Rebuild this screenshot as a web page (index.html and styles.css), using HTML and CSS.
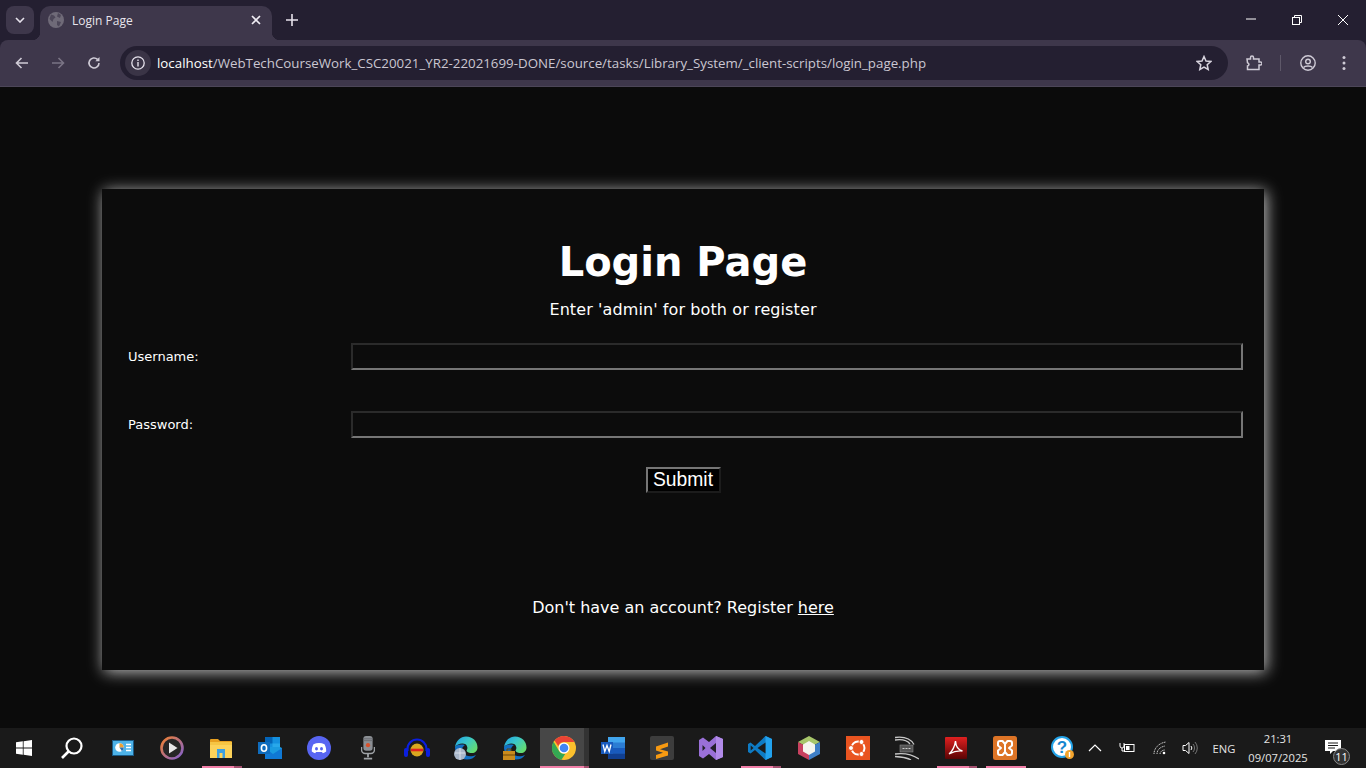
FILE: index.html
```html
<!DOCTYPE html>
<html lang="en">
<head>
<meta charset="utf-8">
<title>Login Page</title>
<link rel="stylesheet" href="styles.css">
</head>
<body>
<div class="screen">
  <header class="browser">
    <div class="tabstrip">
      <button class="tabsearch"><svg width="10" height="6" viewBox="0 0 10 6"><path d="M1 1l4 4 4-4" fill="none" stroke="#e6e2ec" stroke-width="1.6"/></svg></button>
      <div class="tab">
        <svg class="favicon" width="16" height="16" viewBox="0 0 16 16"><circle cx="8" cy="8" r="8" fill="#6f6a78"/><path d="M3 2.500l3 1 1.500 2-2 1.500-1 3-3-3zM10 1l3 2-1 3-3-1.500zM9 9l4 1-2 4.500-2-1.500z" fill="#4d4759"/></svg>
        <span class="tabtitle">Login Page</span>
        <svg class="tabclose" width="10" height="10" viewBox="0 0 10 10"><path d="M1 1l8 8M9 1l-8 8" stroke="#f0edf4" stroke-width="1.700"/></svg>
      </div>
      <svg class="newtab" width="12" height="12" viewBox="0 0 12 12"><path d="M6 0v12M0 6h12" stroke="#e6e2ec" stroke-width="1.600"/></svg>
      <div class="winctl">
        <svg class="winmin" width="10" height="10" viewBox="0 0 10 10"><path d="M0 5h10" stroke="#fff"/></svg>
        <svg width="10" height="10" viewBox="0 0 10 10"><path d="M2.500 2V.5h7v7H8" fill="none" stroke="#fff"/><rect x=".5" y="2.500" width="7" height="7" fill="none" stroke="#fff"/></svg>
        <svg width="10" height="10" viewBox="0 0 10 10"><path d="M0 0l10 10M10 0L0 10" stroke="#fff"/></svg>
      </div>
    </div>
    <div class="toolbar">
      <svg class="navicon" width="14" height="12" viewBox="0 0 14 12"><path d="M13 6H2M6.500 1L1.500 6l5 5" fill="none" stroke="#cfcbd6" stroke-width="1.600"/></svg>
      <svg class="navicon" width="14" height="12" viewBox="0 0 14 12"><path d="M1 6h11M7.500 1l5 5-5 5" fill="none" stroke="#7a7485" stroke-width="1.600"/></svg>
      <svg class="navicon" width="14" height="14" viewBox="0 0 14 14"><path d="M12 7a5 5 0 1 1-1.500-3.600" fill="none" stroke="#cfcbd6" stroke-width="1.600"/><path d="M12.500 1v4.200H8.300z" fill="#cfcbd6"/></svg>
      <div class="omnibox">
        <span class="siteinfo"><svg width="14" height="14" viewBox="0 0 14 14"><circle cx="7" cy="7" r="6.200" fill="none" stroke="#e6e2ec" stroke-width="1.300"/><path d="M7 6v4.500M7 3.500v1.500" stroke="#e6e2ec" stroke-width="1.400"/></svg></span>
        <span class="url"><b>localhost</b>/WebTechCourseWork_CSC20021_YR2-22021699-DONE/source/tasks/Library_System/_client-scripts/login_page.php</span>
        <svg class="star" width="16" height="16" viewBox="0 0 16 16"><path d="M8 1.500l2 4.500 4.800.5-3.600 3.200 1 4.800L8 12.100l-4.200 2.400 1-4.800L1.200 6.500 6 6z" fill="none" stroke="#d8d4de" stroke-width="1.500"/></svg>
      </div>
      <svg class="puzzle" width="16" height="16" viewBox="0 0 16 16"><path d="M1 4h3.500V2.500a1.500 1.500 0 0 1 3 0V4H13v3h1.500a1 1 0 0 1 0 3H13v4.500H1.500V11a1.500 1.500 0 0 0 1-2.500 1.500 1.500 0 0 0-1-.8z" fill="none" stroke="#cfcbd6" stroke-width="1.500"/></svg>
      <span class="tooldiv"></span>
      <svg class="avatar" width="16" height="16" viewBox="0 0 16 16"><circle cx="8" cy="8" r="7.200" fill="none" stroke="#cfcbd6" stroke-width="1.400"/><circle cx="8" cy="6.500" r="2.300" fill="none" stroke="#cfcbd6" stroke-width="1.400"/><path d="M3.500 12.500c1.500-2 7.500-2 9 0" fill="none" stroke="#cfcbd6" stroke-width="1.400"/></svg>
      <svg class="kebab" width="4" height="16" viewBox="0 0 4 16"><circle cx="2" cy="2.500" r="1.500" fill="#cfcbd6"/><circle cx="2" cy="8" r="1.500" fill="#cfcbd6"/><circle cx="2" cy="13.500" r="1.500" fill="#cfcbd6"/></svg>
    </div>
  </header>

  <main class="page">
    <section class="card">
      <h1>Login Page</h1>
      <p class="hint">Enter 'admin' for both or register</p>
      <form class="loginform">
        <div class="fields">
          <label class="fieldlabel" for="u">Username:</label>
          <input class="field" id="u" type="text">
          <label class="fieldlabel" for="p">Password:</label>
          <input class="field" id="p" type="password">
        </div>
        <div class="actions"><button class="submit" type="button">Submit</button></div>
      </form>
      <p class="register">Don't have an account? Register <a href="#">here</a></p>
    </section>
  </main>

  <footer class="taskbar">
    <div class="apps">
      <span class="app narrow"><svg width="16" height="16" viewBox="0 0 16 16"><path d="M0 2.300l6.800-1v6.300H0zM7.600 1.200L16 0v7.600H7.600zM0 8.400h6.800v6.300l-6.800-1zM7.600 8.400H16V16l-8.400-1.200z" fill="#fff"/></svg></span>
      <span class="app narrow"><svg width="24" height="24" viewBox="0 0 24 24"><circle cx="14" cy="10" r="7.500" fill="none" stroke="#fff" stroke-width="2.200"/><path d="M8.500 15.500L2 22" stroke="#fff" stroke-width="2.600"/></svg></span>
      <span class="gap2"></span>
      <span class="app"><svg width="22" height="16" viewBox="0 0 22 16"><rect x=".5" y=".5" width="21" height="15" fill="#4db2e8" stroke="#1a5a86"/><circle cx="7.500" cy="7.500" r="4.300" fill="#fff"/><path d="M7.500 7.500V3.200a4.300 4.300 0 0 1 4.300 4.300z" fill="#f0a030"/><path d="M7.500 7.500h4.300a4.300 4.300 0 0 1-2 3.600z" fill="#2a6fb0"/><path d="M14 4.500h5M14 7.500h5M14 10.500h5" stroke="#fff" stroke-width="1.400"/></svg></span>
      <span class="app"><svg width="24" height="24" viewBox="0 0 24 24"><defs><linearGradient id="pl" x1="0" y1="0" x2="1" y2="1"><stop offset="0" stop-color="#f08030"/><stop offset="1" stop-color="#8060d0"/></linearGradient></defs><circle cx="12" cy="12" r="10.500" fill="#262626" stroke="url(#pl)" stroke-width="2.600"/><path d="M9 6.500l8.500 5.500L9 17.500z" fill="#e8e8e8"/></svg></span>
      <span class="app running stack"><svg width="22" height="20" viewBox="0 0 22 20"><path d="M0 2a1 1 0 0 1 1-1h7l2 2h11a1 1 0 0 1 1 1v2H0z" fill="#e8a020"/><rect y="4" width="22" height="16" fill="#fcd25a"/><path d="M0 4h22v3H0z" fill="#f6c544"/><path d="M7 11h8v9H7z" fill="#3c9fe0"/><path d="M9.500 15h3v5h-3z" fill="#fcd25a"/></svg></span>
      <span class="app"><svg width="24" height="24" viewBox="0 0 24 24"><rect x="7" y="1" width="15" height="13" fill="#1490df"/><rect x="7" y="1" width="7.500" height="6.500" fill="#0364b8"/><rect x="14.500" y="7.500" width="7.500" height="6.500" fill="#28a8ea"/><path d="M7 11l15 0 2 1v10l-17 0z" fill="#1a9be0"/><path d="M7 12l8 6 9-6v11H7z" fill="#0f78d4"/><rect x="0" y="6" width="12" height="12" fill="#0f6cbd"/><ellipse cx="6" cy="12" rx="2.600" ry="3.300" fill="none" stroke="#fff" stroke-width="1.600"/></svg></span>
      <span class="app"><svg width="24" height="24" viewBox="0 0 24 24"><circle cx="12" cy="12" r="12" fill="#5865f2"/><path d="M6.500 8.200c3.300-1.700 7.700-1.700 11 0 1.300 2.200 1.800 4.700 1.700 7.300-1 .8-2.200 1.400-3.400 1.700l-.8-1.300H9l-.8 1.300c-1.200-.3-2.400-.9-3.400-1.700-.1-2.600.4-5.100 1.700-7.300z" fill="#fff"/><ellipse cx="9.500" cy="12.700" rx="1.500" ry="1.700" fill="#5865f2"/><ellipse cx="14.500" cy="12.700" rx="1.500" ry="1.700" fill="#5865f2"/></svg></span>
      <span class="app"><svg width="14" height="24" viewBox="0 0 14 26"><rect x="2" y="0" width="10" height="16" rx="3" fill="#8b8f94"/><path d="M2 5h10M2 3h10" stroke="#6a6d72"/><circle cx="7" cy="10" r="2.300" fill="#d8502a"/><path d="M0 12v3a4 4 0 0 0 4 4h6a4 4 0 0 0 4-4v-3" fill="none" stroke="#9ea2a6" stroke-width="1.500"/><path d="M7 19v4M2.500 24.500h9" stroke="#9ea2a6" stroke-width="2"/></svg></span>
      <span class="app"><svg width="26" height="22" viewBox="0 0 26 22"><path d="M3.500 14V12a9.500 9.500 0 0 1 19 0v2" fill="none" stroke="#0b1fe0" stroke-width="2.200"/><rect x="0" y="11" width="4" height="9" rx="2" fill="#0b1fe0"/><rect x="22" y="11" width="4" height="9" rx="2" fill="#0b1fe0"/><ellipse cx="13" cy="13" rx="6.500" ry="6.500" fill="#d9a820"/><path d="M7 13h12" stroke="#e02020" stroke-width="2.600"/></svg></span>
      <span class="app"><svg width="24" height="24" viewBox="0 0 24 24"><defs><linearGradient id="ed" x1="0" y1="0" x2="1" y2=".7"><stop offset="0" stop-color="#1f9ee6"/><stop offset=".5" stop-color="#3bc8c8"/><stop offset="1" stop-color="#66dc6e"/></linearGradient></defs><path d="M1 11c0 7 5 12.500 12 12.500 4 0 7-1.500 9-4.500-4 2-10 2-13-2-2-3-1-6 2-8-5-1-9 0-10 2z" fill="#1270c4"/><path d="M1 11C2 5 6.500 .5 12 .5c7 0 11.500 5 11.500 11 0 3.500-2.500 5.500-5.500 5.500-2.500 0-5-.5-5.500-2.500 1-1.500 1.500-3-.5-6-3.500-2-9-.5-11 2.500z" fill="url(#ed)"/><circle cx="6" cy="18" r="6" fill="#a9b7ca"/><path d="M1 17h10M6 12v12" stroke="#e4e9f0" stroke-width=".8"/></svg></span>
      <span class="app"><svg width="24" height="24" viewBox="0 0 24 24"><path d="M1 11c0 7 5 12.500 12 12.500 4 0 7-1.500 9-4.500-4 2-10 2-13-2-2-3-1-6 2-8-5-1-9 0-10 2z" fill="#1270c4"/><path d="M1 11C2 5 6.500 .5 12 .5c7 0 11.500 5 11.500 11 0 3.500-2.500 5.500-5.500 5.500-2.500 0-5-.5-5.500-2.500 1-1.500 1.500-3-.5-6-3.500-2-9-.5-11 2.500z" fill="url(#ed)"/><rect x="0" y="15" width="12" height="9" fill="#c98a1c"/><path d="M4 15v-2h4v2M0 19h12" fill="none" stroke="#6b4708"/></svg></span>
      <span class="app active running"><svg width="24" height="24" viewBox="0 0 24 24"><circle cx="12" cy="12" r="12" fill="#fbc02d"/><path d="M12 0a12 12 0 0 1 10.400 6H12a6 6 0 0 0-5.700 4.200L2.600 4.400A12 12 0 0 1 12 0z" fill="#ea4335"/><path d="M1.600 5.800L7 15a6 6 0 0 0 6.200 2.900l-3.700 5.900A12 12 0 0 1 1.600 5.800z" fill="#34a853"/><circle cx="12" cy="12" r="5.500" fill="#fff"/><circle cx="12" cy="12" r="4.300" fill="#4285f4"/></svg></span>
      <span class="app"><svg width="24" height="22" viewBox="0 0 24 22"><rect x="7" y="0" width="17" height="22" rx="1" fill="#2b7cd3"/><rect x="7" y="0" width="17" height="5.500" fill="#41a5ee"/><rect x="7" y="11" width="17" height="5.500" fill="#185abd"/><rect x="7" y="16.500" width="17" height="5.500" fill="#103f91"/><rect x="0" y="5" width="12" height="12" fill="#185abd"/><path d="M2 7.500l1.800 7 2.200-6 2.200 6 1.800-7" fill="none" stroke="#fff" stroke-width="1.300"/></svg></span>
      <span class="app"><svg width="24" height="24" viewBox="0 0 24 24"><rect width="24" height="24" rx="2" fill="#3d3d3d"/><path d="M6 10.500l12-4v4l-8 2.700 8 2.300v4l-12 3.500v-4l7-2.200-7-2.300z" fill="#f79a12"/></svg></span>
      <span class="app"><svg width="24" height="24" viewBox="0 0 24 24"><path d="M17 0l7 3v18l-7 3-7-6-6 4.500L0 20V4l4-2.500L10 6z" fill="#9a70d8"/><path d="M17 7v10l-6-5z" fill="#23202a"/><path d="M3.500 9v6l3-3z" fill="#23202a"/><path d="M17 0l7 3v18l-7 3z" fill="#b18ae8"/></svg></span>
      <span class="app running stack"><svg width="24" height="24" viewBox="0 0 24 24"><path d="M17.500 0L24 3v18l-6.500 3L7 14l-4.500 3.500L0 16V8l2.500-1.500L7 10z" fill="#0e7bc4"/><path d="M17.500 0L24 3v18l-6.500 3z" fill="#22a2ee"/><path d="M17.500 6.500v11L9.500 12z" fill="#1a1a1a"/><path d="M2.700 9.500v5L5.500 12z" fill="#1a1a1a"/></svg></span>
      <span class="app"><svg width="22" height="24" viewBox="0 0 22 24"><path d="M11 0l11 6-11 6L0 6z" fill="#a7c66a"/><path d="M0 6l11 6v12L0 18z" fill="#c8415f"/><path d="M22 6L11 12v12l11-6z" fill="#3f7fc6"/><path d="M11 5l6 3.500v7L11 19l-6-3.500v-7z" fill="#f5f5ee"/></svg></span>
      <span class="app"><svg width="24" height="24" viewBox="0 0 24 24"><rect width="24" height="24" fill="#e95420"/><circle cx="12" cy="12" r="6.500" fill="none" stroke="#fff" stroke-width="2"/><circle cx="5" cy="12" r="2.500" fill="#fff" stroke="#e95420"/><circle cx="15.500" cy="6" r="2.500" fill="#fff" stroke="#e95420"/><circle cx="15.500" cy="18" r="2.500" fill="#fff" stroke="#e95420"/></svg></span>
      <span class="app"><svg width="24" height="24" viewBox="0 0 24 24"><path d="M0 1.500c8-1 15 0 19 7M0 4c7-1 12 0 15 4M0 18c7-1 15-1 24 5M0 20.500c7 .5 12 1 16 3.500" fill="none" stroke="#c8c8c8" stroke-width="1.300"/><rect x="5" y="9" width="13" height="7" fill="#555" stroke="#888" stroke-width=".6"/><path d="M7.500 12.500h8" stroke="#ccc" stroke-dasharray="2 1"/></svg></span>
      <span class="app running stack"><svg width="22" height="22" viewBox="0 0 22 22"><defs><linearGradient id="ac" x1="0" y1="0" x2="0" y2="1"><stop offset="0" stop-color="#e02020"/><stop offset="1" stop-color="#5a0404"/></linearGradient></defs><rect width="22" height="22" rx="1" fill="url(#ac)"/><path d="M4 17c3-2 6-8 6.500-13 .3 5 3 9 7 10-4-.5-8 0-13.500 3z" fill="none" stroke="#fff" stroke-width="1.400"/></svg></span>
      <span class="app running"><svg width="24" height="24" viewBox="0 0 24 24"><rect width="24" height="24" rx="2.500" fill="#dd7426"/><path d="M7 5h2.500L12 8l2.500-3H17a2 2 0 0 1 2 2v2.500L16 12l3 2.500V17a2 2 0 0 1-2 2h-2.500L12 16l-2.500 3H7a2 2 0 0 1-2-2v-2.500L8 12 5 9.500V7a2 2 0 0 1 2-2z" fill="none" stroke="#fff" stroke-width="2" stroke-linejoin="round"/><path d="M12 8v8" stroke="#fff" stroke-width="2"/></svg></span>
    </div>
    <div class="tray">
      <span class="trayitem help"><svg width="24" height="24" viewBox="0 0 24 24"><circle cx="11" cy="11" r="10" fill="#fff" stroke="#23a3e8" stroke-width="2"/><text class="helpq" x="11" y="16.500" text-anchor="middle">?</text><circle cx="18.500" cy="18.500" r="4.500" fill="#f2a32c"/><path d="M18.500 16v5" stroke="#fff" stroke-width="1.400"/></svg></span>
      <span class="trayitem chev"><svg width="14" height="8" viewBox="0 0 14 8"><path d="M1 7l6-6 6 6" fill="none" stroke="#fff" stroke-width="1.200"/></svg></span>
      <span class="trayitem batt"><svg width="16" height="12" viewBox="0 0 16 12"><path d="M1 1v3a2 2 0 0 0 4 0V1M3 6v3h2" fill="none" stroke="#fff"/><rect x="5.500" y="2.500" width="9.500" height="7" fill="none" stroke="#fff"/><rect x="7" y="4" width="3.500" height="4" fill="#fff"/></svg></span>
      <span class="trayitem wifi"><svg width="14" height="14" viewBox="0 0 14 14"><path d="M1 13C1 7 6 2 13 1M4 13c0-4 3-7 8-8M7 13c0-2 2-4 5-4" fill="none" stroke="#c8c8c8" stroke-dasharray="1.200 .6"/><circle cx="11" cy="12" r="1.300" fill="#fff"/></svg></span>
      <span class="trayitem vol"><svg width="16" height="14" viewBox="0 0 16 14"><path d="M1 4.500h2.500L7 1.500v11L3.500 9.500H1z" fill="none" stroke="#fff"/><path d="M9 5a3 3 0 0 1 0 4" fill="none" stroke="#fff"/><path d="M11 3a6 6 0 0 1 0 8M13 1a9 9 0 0 1 0 12" fill="none" stroke="#777"/></svg></span>
      <span class="lang">ENG</span>
      <span class="clock"><span>21:31</span><span>09/07/2025</span></span>
      <span class="notif"><svg width="16" height="14" viewBox="0 0 16 14"><path d="M0 0h16v11H8l-3 3v-3H0z" fill="#fff"/><path d="M3 3h10M3 5.500h10M3 8h7" stroke="#1a1a1a"/></svg><span class="badge">11</span></span>
    </div>
  </footer>
</div>
</body>
</html>
```
FILE: styles.css
```css
* { box-sizing: border-box; }
html, body { margin: 0; height: 100%; }
body { background: #0b0b0b; overflow: hidden; }
.screen { display: flex; flex-direction: column; height: 768px; width: 1366px; }

/* browser chrome */
.browser { background: #241f31; font-family: "Open Sans", "Liberation Sans", sans-serif; flex: none; }
.tabstrip { height: 40px; display: flex; align-items: flex-end; padding-left: 6px; position: relative; }
.tabsearch { width: 28px; height: 28px; margin-bottom: 6px; border: 0; padding: 0; border-radius: 8px; background: #3e374b; display: flex; align-items: center; justify-content: center; }
.tab { width: 232px; height: 34px; margin-left: 6px; background: #3e374b; border-radius: 10px 10px 0 0; display: flex; align-items: center; padding: 0 11px 6px 8px; position: relative; }
.tab::before, .tab::after { content: ""; position: absolute; bottom: 0; width: 8px; height: 8px; }
.tab::before { left: -8px; background: radial-gradient(circle at 0 0, transparent 8px, #3e374b 8.5px); }
.tab::after { right: -8px; background: radial-gradient(circle at 100% 0, transparent 8px, #3e374b 8.5px); }
.tabtitle { color: #e8e5ed; font-size: 12px; margin-left: 8px; flex: 1; }
.newtab { margin: 0 0 14px 14px; }
.winctl { margin-left: auto; height: 40px; display: flex; align-items: center; gap: 36px; padding-right: 18px; }
.winmin { margin-top: -2px; }
.toolbar { height: 47px; background: #3e374b; border-radius: 8px 8px 0 0; border-bottom: 1px solid #4c4658; display: flex; align-items: center; padding-left: 15px; }
.navicon { margin-right: 22px; flex: none; }
.omnibox { width: 1108px; height: 34px; margin-left: -3px; background: #241f31; border-radius: 17px; display: flex; align-items: center; padding: 0 16px 0 5px; flex: none; }
.siteinfo { width: 26px; height: 26px; border-radius: 50%; background: #3a3446; display: flex; align-items: center; justify-content: center; }
.url { color: #cbc7d2; font-size: 13.320px; margin-left: 6px; flex: 1; white-space: nowrap; }
.url b { color: #fff; font-weight: 400; }
.puzzle { margin-left: 18px; }
.tooldiv { width: 1px; height: 16px; background: #5e5869; margin-left: 18px; }
.avatar { margin-left: 19px; }
.kebab { margin-left: 26px; }

/* page */
.page { flex: 1; padding: 102px 102px 0; min-height: 0; }
.card { height: 481px; background: #0c0c0c; box-shadow: 2px 2px 15px rgba(255, 255, 255, .75); color: #fff; font-family: "DejaVu Sans", Verdana, sans-serif; padding-top: 49px; text-align: center; }
h1 { margin: 0; font-size: 40px; line-height: 48px; font-weight: 700; }
.hint { margin: 14px 0 0; font-size: 16px; line-height: 20px; letter-spacing: .1px; }
.loginform { margin-top: 23px; }
.fields { display: grid; grid-template-columns: 223px 1fr; row-gap: 41px; padding: 0 21px 0 26px; align-items: center; text-align: left; }
.fieldlabel { font-size: 13px; }
.field { height: 27px; width: 100%; background: #0c0c0c; border-width: 2px; border-style: solid; border-color: #2b2b2b #767676 #767676 #2b2b2b; color: #fff; padding: 0 2px; }
.actions { margin-top: 29px; height: 26px; }
.submit { width: 75px; height: 26px; background: #000; border-width: 2px; border-style: solid; border-color: #767676 #1c1c1c #1c1c1c #767676; color: #fff; font-family: "Liberation Sans", Arial, sans-serif; font-size: 19.300px; line-height: 20px; padding: 0; }
.register { margin: 105px 0 0; font-size: 16px; line-height: 20px; }
.register a { color: #fff; }

/* taskbar */
.taskbar { height: 40px; background: #1a1a1a; display: flex; align-items: center; justify-content: space-between; flex: none; font-family: "Open Sans", "Liberation Sans", sans-serif; color: #e4e4e4; }
.apps { display: flex; height: 100%; }
.app { width: 49px; height: 40px; display: flex; align-items: center; justify-content: center; position: relative; }
.app.narrow { width: 48px; }
.gap2 { width: 2.500px; }
.app.running::after { content: ""; position: absolute; left: 5px; right: 4px; bottom: 0; height: 2px; background: #f17fa8; }
.app.stack::after { background: linear-gradient(to right, #f17fa8 80%, #a3506f 80%); }
.app.active { background: linear-gradient(to right, #474747 44px, #333 44px); }
.app.active::after { left: 0; right: 0; background: linear-gradient(to right, #f17fa8 44px, #a3506f 44px); }
.tray { display: flex; align-items: center; height: 100%; }
.trayitem { display: flex; align-items: center; justify-content: center; height: 40px; }
.helpq { font: 700 17px "Liberation Sans", sans-serif; fill: #1787cf; }
.help { width: 36px; padding-left: 2px; }
.chev { width: 30px; }
.batt { width: 34px; }
.wifi { width: 32px; }
.vol { width: 28px; }
.lang { width: 40px; text-align: center; font-size: 11.200px; }
.clock { width: 68px; display: flex; flex-direction: column; align-items: center; font-size: 11.200px; line-height: 19px; }
.notif { width: 54px; height: 40px; display: flex; align-items: center; padding: 0 0 3px 13px; position: relative; }
.badge { position: absolute; left: 21px; top: 20px; width: 17px; height: 17px; border-radius: 50%; background: #333; border: 1px solid #888; font-size: 11px; line-height: 15px; text-align: center; color: #fff; }
```
